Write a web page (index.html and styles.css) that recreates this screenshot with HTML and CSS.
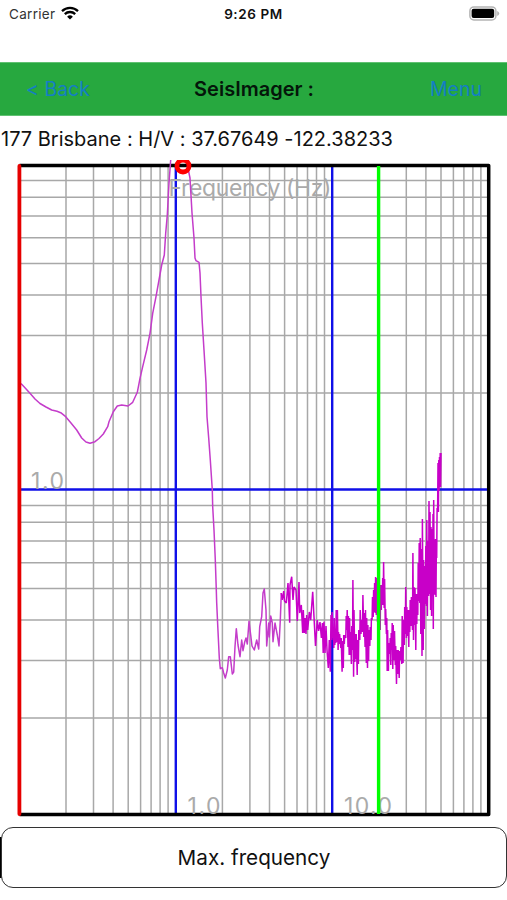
FILE: index.html
```html
<!DOCTYPE html>
<html lang="en">
<head>
    <meta charset="UTF-8">
    <meta name="viewport" content="width=device-width, initial-scale=1.0">
    <title>SeisImager</title>
    <link rel="stylesheet" href="styles.css">
</head>
<body>
    <div class="status-bar">
        <div class="carrier">
            <span>Carrier</span>
            <svg class="wifi" width="18" height="14" viewBox="0 0 18 14">
                <path d="M1 5.1a11.6 11.6 0 0 1 16 0M3.8 8.1a7.5 7.5 0 0 1 10.4 0" fill="none" stroke="#000" stroke-width="2.3"/>
                <path d="M9 13.6L6.1 10.7a4.1 4.1 0 0 1 5.8 0z"/>
            </svg>
        </div>
        <div class="time">9:26 PM</div>
        <svg class="battery" width="31" height="15" viewBox="0 0 31 15">
            <rect x="0.9" y="0.9" width="26" height="13" rx="4" fill="#fff" stroke="#b4b4b4" stroke-width="1.5"/>
            <rect x="2.6" y="2.8" width="22.6" height="9.2" rx="2"/>
            <path d="M28.2 5v5q2-.8 2-2.5t-2-2.5z" fill="#b4b4b4"/>
        </svg>
    </div>

    <div class="header">
        <a class="back">&lt; Back</a>
        <h1>SeisImager :</h1>
        <a class="menu">Menu</a>
    </div>

    <p class="site">177 Brisbane : H/V : 37.67649 -122.38233</p>

    <svg class="chart" width="507" height="660" viewBox="0 160 507 660">
        <g id="grid" class="grid"></g>
        <path class="decade" d="M175.8 166V815M332.2 166V815M19 489.5H488"/>
        <path class="frame" d="M19.5 165.6H488.7V814.5H19.5"/>
        <g class="axis-text">
            <text x="168.5" y="196" textLength="163">Frequency (Hz)</text>
            <text x="31" y="489" textLength="33">1.0</text>
            <text x="187.5" y="813.5" textLength="33">1.0</text>
            <text x="344" y="813.5" textLength="48">10.0</text>
        </g>
        <polyline id="curve" class="curve"/>
        <polyline id="curve-right" class="curve"/>
        <polyline id="noise" class="curve noise"/>
        <path class="min-line" d="M19.4 166V814"/>
        <path class="max-line" d="M378.6 166V814"/>
        <circle class="peak" cx="183" cy="166" r="6"/>
    </svg>

    <div class="button-row">
        <button class="max-button">Max. frequency</button>
    </div>

    <script src="script.js"></script>
</body>
</html>
```
FILE: styles.css
```css
* {
    box-sizing: border-box;
}
body {
    margin: 0;
    height: 900px;
    overflow: hidden;
    background: white;
    font-family: Inter, "Liberation Sans", sans-serif;
    font-feature-settings: "calt" 0;
    color: #111;
}
.status-bar {
    display: grid;
    grid-template-columns: 1fr auto 1fr;
    align-items: center;
    height: 62px;
    padding: 0 7px 35px 9px;
    font-size: 13.5px;
}
.carrier {
    display: flex;
    align-items: center;
    gap: 6px;
    color: #333;
    letter-spacing: 0.3px;
}
.wifi {
    margin-top: -2px;
}
.time {
    font-weight: 600;
    font-size: 13.5px;
    color: #111;
    letter-spacing: 0.6px;
    margin-left: -2px;
}
.battery {
    justify-self: end;
    margin-top: -1px;
}
.header {
    display: grid;
    grid-template-columns: 1fr auto 1fr;
    align-items: center;
    height: 54px;
    padding: 0 25px 0 26px;
    background: #27a83f;
    border-top: 1px solid #60c172;
    border-bottom: 1px solid #60c172;
}
.header h1 {
    margin: 0;
    font-size: 20px;
    font-weight: 600;
    color: #04160a;
}
.back, .menu {
    font-size: 19.5px;
    color: #147ec4;
}
.menu {
    text-align: right;
}
.site {
    margin: 0;
    height: 44px;
    padding-left: 1px;
    font-size: 20px;
    line-height: 46px;
    white-space: nowrap;
}
.chart {
    display: block;
}
.grid {
    fill: none;
    stroke: #a8a8a8;
    stroke-width: 1.5;
}
.decade {
    fill: none;
    stroke: #1010e8;
    stroke-width: 2.4;
}
.frame {
    fill: none;
    stroke: #000;
    stroke-width: 3.5;
    stroke-linejoin: round;
}
.axis-text {
    font-size: 23px;
    fill: #aaa;
}
.curve {
    fill: none;
    stroke: #c43cca;
    stroke-width: 1.5;
    stroke-linejoin: round;
}
.noise {
    stroke: #c800c8;
    stroke-width: 1.5;
    stroke-linejoin: bevel;
}
.min-line {
    stroke: #e60000;
    stroke-width: 3.8;
    stroke-linecap: round;
}
.max-line {
    stroke: #0f0;
    stroke-width: 3.4;
}
.peak {
    fill: none;
    stroke: #f00;
    stroke-width: 4.8;
}
.button-row {
    height: 61px;
    margin-top: 7px;
    padding-left: 1px;
    background: linear-gradient(#000, #000) 0 10px / 2px 41px no-repeat;
}
.max-button {
    display: block;
    width: 506px;
    height: 61px;
    padding: 0;
    background: white;
    border: 1.5px solid #333;
    border-radius: 12px;
    font-family: inherit;
    font-size: 20.7px;
    color: #111;
}
```
FILE: script.js
```js
const decadeWidth = 156.4;
const decadeHeight = 325;

// log-log grid lines, two decades down and three across
let lines = '';
for (let n = 2; n < 10; n++) {
    for (let d = 0; d < 3; d++) {
        const x = 18.9 + decadeWidth * (d + Math.log10(n));
        lines += `M${x.toFixed(1)} 167V814`;
    }
    for (let d = 1; d < 3; d++) {
        const y = 165.7 + decadeHeight * (d - Math.log10(n));
        lines += `M20 ${y.toFixed(1)}H488`;
    }
}
document.getElementById('grid').innerHTML = `<path d="${lines}"/>`;

const curve = [
    [20, 383], [21.7, 384.3], [30, 393.3], [35, 399], [40, 403.5], [46, 407], [51.7, 410], [57, 411.3],
    [60.7, 412.7], [65.7, 416.7], [71, 423], [76.7, 430], [81.7, 438], [86, 442], [90, 443.3],
    [95, 441.7], [99, 438.5], [103.3, 434], [107.7, 426.7], [109, 421.7], [113.3, 411.7],
    [117.3, 406], [121.7, 405], [128, 406], [132.7, 402.3], [137.3, 392.3], [140, 378.3],
    [142.7, 366.7], [146.7, 350], [150, 333.3], [152.7, 313.3], [156, 296.7], [161.7, 265],
    [164.3, 255], [165.7, 233.3], [167.3, 215], [169, 183], [170.7, 160]
];

const curveRight = [
    [187.5, 166], [190, 178], [192, 213], [194, 238], [195, 258], [196, 260.7], [199, 262.3],
    [200, 273], [201, 296.7], [202.3, 323], [204, 350], [206, 383], [207, 416.7], [208.7, 438],
    [210.3, 460], [212.3, 490], [212.7, 506.7], [214, 530], [215.3, 560], [216.3, 590],
    [216.7, 603], [217.7, 625], [219.3, 658], [220.3, 668.7], [222.3, 667.7], [223.7, 673],
    [225.3, 678], [227.3, 670], [228.7, 656.7], [230.3, 656.7], [232.3, 674], [233.7, 672],
    [235, 646.7], [236.3, 628.7], [238, 645], [240, 656.7], [241.7, 640], [243, 650.7],
    [244.7, 642], [246, 638], [247.3, 644], [249, 621.3], [250.7, 635], [252, 646], [254.3, 650],
    [256.7, 640], [258.7, 649], [259.7, 626.7], [261.7, 616.7], [263, 593], [264.3, 589],
    [266, 610], [266.7, 646], [268.7, 623], [269.3, 637], [270.7, 616], [272.3, 623],
    [273, 641.7], [275, 623], [277.3, 635], [279, 646], [280.3, 620], [281.3, 593]
];

const noise = [
    [281.3, 593], [282.3, 600], [283.7, 591], [284.5, 601], [286.3, 603], [288, 583],
    [289.7, 622.7], [290, 585], [291.7, 576.7], [293, 600], [294, 587], [296, 590], [297.3, 621],
    [299, 582], [299.7, 613], [301.3, 605], [302.7, 633], [303.3, 610], [304.3, 633], [305, 618],
    [306, 634], [306.7, 615], [307.7, 630], [309.3, 612], [310.7, 620], [312.7, 591.7],
    [314, 617], [315.5, 646], [317.3, 620], [318.6, 631], [320, 622], [321.4, 638],
    [322.4, 623], [323.2, 653], [324, 621.7], [325, 653], [326, 626], [327, 650],
    [328.3, 668], [329.3, 640], [330.3, 671.7], [331, 615]
];

// densely sampled part: x, highest y, lowest y
const spikes = [
    [332, 612, 640], [333, 628, 638], [334, 618, 648], [335, 630, 645], [336, 610, 643],
    [337.2, 610, 642], [338.3, 632, 650], [339.4, 634, 644], [341, 638, 648], [342.3, 641, 671.7],
    [343.5, 635, 668], [344.5, 635, 644], [346, 616, 638], [347, 610, 630], [348.2, 616, 647],
    [349.4, 618, 655], [350.5, 632, 655], [351.6, 626, 664], [352.7, 580, 650],
    [353.8, 610, 676.7], [355, 634, 662], [356, 634, 659], [357.4, 640, 675],
    [358.6, 630, 664], [360, 610, 640], [361.2, 620, 634], [362.7, 595, 632],
    [364, 613, 637], [365.3, 610, 647], [366.5, 618, 663], [367.7, 625, 668],
    [368.8, 630, 661], [370, 627, 646], [371.2, 618, 640], [372.3, 597, 620],
    [373.4, 590, 617], [374.4, 583, 612], [375.4, 577, 613], [376.5, 578, 615],
    [377.7, 582, 622], [379, 586, 620], [380.4, 585, 630], [381.5, 585, 610],
    [382.5, 578, 605], [383.4, 562, 605], [384.4, 579, 608], [385.5, 609, 625],
    [386.6, 618, 634], [387.4, 630, 671], [388.6, 643, 671], [390, 638, 654],
    [391, 633, 665], [392, 623, 650], [393, 625, 669], [394.3, 631, 660],
    [395.5, 646, 665], [396.7, 650, 684], [398, 650, 674], [399.4, 651, 678],
    [400.7, 647, 660], [402, 616, 664], [403.3, 620, 663], [404.5, 607, 645],
    [405.5, 587, 634], [406.6, 607, 638], [407.8, 610, 636], [409, 610, 647],
    [410, 600, 632], [411.2, 597, 626], [412.7, 553, 630], [413.7, 587, 640],
    [414.8, 588, 625], [416, 594, 650], [417, 594, 624], [418, 563, 615],
    [419, 543, 601], [420, 538, 603], [421, 549, 634], [422.2, 519, 656],
    [423.4, 560, 650], [424.5, 566, 629], [425.6, 546, 604], [426.6, 520, 606],
    [427.6, 541, 616], [428.8, 501, 596], [429.8, 512, 594], [430.8, 527, 610],
    [431.8, 529, 616], [432.8, 514, 593], [433.5, 500, 629], [434.4, 540, 594],
    [435.3, 539, 595], [436.2, 539, 597], [436.9, 508, 558], [437.8, 463, 512],
    [438.6, 460, 512], [439.3, 457, 491], [440, 453, 482], [440.8, 453, 487]
];
spikes.forEach(([x, top, bottom]) => {
    noise.push([x - 0.2, bottom], [x + 0.2, top]);
});

function draw(id, points) {
    document.getElementById(id).setAttribute('points', points.map(p => p.join(',')).join(' '));
}

draw('curve', curve);
draw('curve-right', curveRight);
draw('noise', noise);
```
